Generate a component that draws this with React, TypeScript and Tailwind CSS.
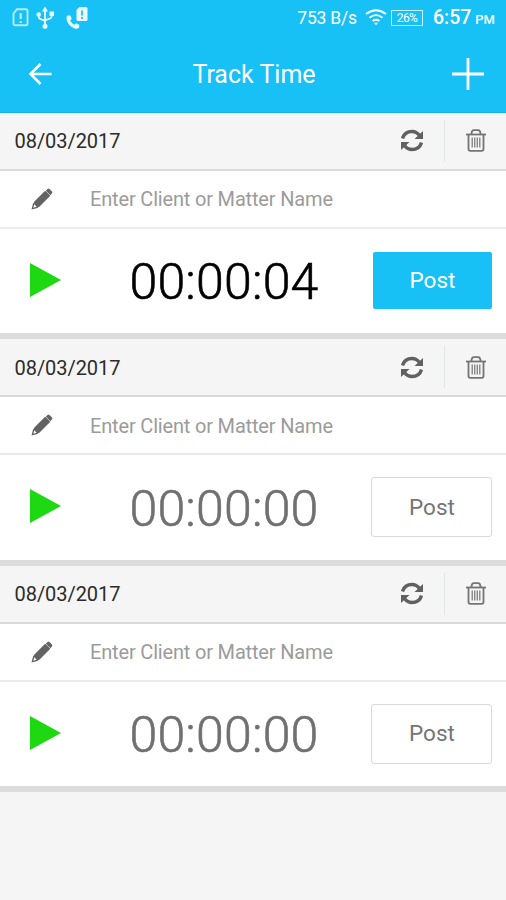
const StatusBar = () => {
  return (
    <div className="flex h-9 items-center justify-between pl-3 pr-[11px] text-white">
      <div className="flex items-center">
        <svg width="80" height="32" viewBox="0 0 80 32" fill="none">
          <g stroke="#b5ebfc" strokeWidth="1.9">
            <path d="M5 7.3h9a1.500 1.500 0 0 1 1.500 1.500v13a1.500 1.500 0 0 1-1.500 1.500H3a1.500 1.500 0 0 1-1.500-1.500V11.500z" />
            <path d="M8.700 11v6M8.700 19v2" strokeWidth="2.200" />
          </g>
          <g stroke="#e9faff" strokeWidth="1.800">
            <path d="M33 6v17M26.700 12v2.500q0 2 2 2.700l4.300 1.600M39.700 11v3q0 2-2 2.700L33 18.300" />
          </g>
          <g fill="#e9faff">
            <path d="M33 4.500l3 5h-6z" />
            <circle cx="33" cy="24.300" r="2.500" />
            <circle cx="26.700" cy="12.500" r="2.300" />
            <path d="M37.500 9.500h4.500v4.500h-4.500z" />
            <path d="M55.500 13.500l2.800 0 1.500 3.200-1.600 1.800q1.500 3 4 4.300l2-1.500 3.100 1.600-.2 2.800q-1.500 1.800-4.500.8-7-3-8.100-9.500-.2-2.600 1-3.500z" />
            <path d="M67.500 5H74q1.500 0 1.500 1.500v11q0 1.500-1.500 1.500h-8q-1.500 0-1.500-1.500V8z" />
          </g>
          <path d="M70 8.500v5M70 15v2" stroke="#17c0f5" strokeWidth="1.700" />
        </svg>
      </div>
      <div className="flex items-center">
        <span className="text-[17.500px] tracking-[-0.2px]">753 B/s</span>
        <svg
          className="ml-2"
          width="22"
          height="18"
          viewBox="0 0 22 18"
          fill="none"
          stroke="currentColor"
          strokeWidth="1.800"
        >
          <path d="M1 5q10-7.500 20 0M4.500 8.700q6.500-5 13 0M7.600 12q3.400-2.500 6.800 0" />
          <path d="M9 13.800h4l-2 2.400z" fill="currentColor" stroke="none" />
        </svg>
        <span className="mb-px ml-1 flex h-4 w-8 items-center justify-center border border-[#c9f1fd] text-[12px] tracking-[-0.700px]">
          26%
        </span>
        <span className="ml-2.5 text-[19.500px] font-medium">6:57</span>
        <span className="ml-1 mt-1 text-[13px] font-medium">PM</span>
      </div>
    </div>
  );
};

const Header = () => {
  return (
    <div className="flex h-[76.500px] items-center justify-between border-b border-[#14b3e6] pl-7 pr-[22px] text-white">
      <svg width="24" height="24" viewBox="0 0 24 24" fill="none" stroke="currentColor" strokeWidth="2.500">
        <path d="M12.500 2L2.500 12l10 10M2 12h21.500" />
      </svg>
      <p className="pl-1 pt-0.5 text-[25px]">Track Time</p>
      <svg width="32" height="32" viewBox="0 0 32 32" stroke="currentColor" strokeWidth="2.800">
        <path d="M16 0v32M0 16h32" />
      </svg>
    </div>
  );
};

const RefreshIcon = () => (
  <svg width="22" height="23" viewBox="0 0 22 23" fill="none" stroke="#606060">
    <path d="M1.500 9.500Q3.500 2.500 11 2.500q4.500 0 7.500 4M20.500 13.500Q18.500 20.500 11 20.500q-4.500 0-7.500-4" strokeWidth="3.400" />
    <path d="M22 2V10h-8.500zM0 21V13h8.500z" fill="#606060" stroke="none" />
  </svg>
);

const TrashIcon = () => (
  <svg width="20" height="23" viewBox="0 0 20 23" fill="none" stroke="#747474">
    <path d="M0 5.500h20" strokeWidth="1.800" />
    <path d="M5.500 5q0-3.800 2.500-3.800h4q2.500 0 2.500 3.800M2.500 6v14q0 1.800 1.800 1.800h11.400q1.800 0 1.800-1.800V6" strokeWidth="1.800" />
    <path d="M6.200 8.500v10M8.750 8.500v10M11.250 8.500v10M13.800 8.500v10" strokeWidth="1.200" />
  </svg>
);

const PencilIcon = () => (
  <svg width="22" height="22" viewBox="0 0 22 22" fill="#636363">
    <path d="M16.500 1q1-.8 2 .1l2.500 2.500q.8 1-.1 1.900L19.300 7.200 14.800 2.700z" />
    <path d="M14.200 3.300l4.500 4.500L6.500 20 .5 21.500 2 15.500zM3.300 16.300l-1 3.400 3.400-1z" fillRule="evenodd" />
    <path d="M3.500 14L14.200 3.300l4.500 4.500L7.500 19z" stroke="#636363" strokeWidth="1" />
  </svg>
);

const TimeCard = ({
  date,
  time,
  active,
}: {
  date: string;
  time: string;
  active?: boolean;
}) => {
  return (
    <div className="h-[226.500px] border-b-[6px] border-[#dcdcdc] bg-white">
      <div className="flex h-[58px] items-center border-b-2 border-[#d9d9d9] bg-[#f5f5f5] pl-[14.500px] pr-5">
        <p className="flex-1 pt-px text-[20px] tracking-[-0.050px] text-[#2b2b2b]">{date}</p>
        <RefreshIcon />
        <div className="ml-[21px] mr-[21px] h-[42px] w-px bg-[#e3e6e6]" />
        <TrashIcon />
      </div>
      <div className="flex h-[58px] items-center border-b-2 border-[#ebebeb] pl-[31px]">
        <PencilIcon />
        <p className="ml-[37px] pt-px text-[20px] tracking-[-0.170px] text-[#9b9b9b]">
          Enter Client or Matter Name
        </p>
      </div>
      <div className="flex h-[104px] items-center pl-[30px] pr-[14px]">
        <svg className="mb-0.5" width="31" height="34" viewBox="0 0 31 34" fill="#1ed811">
          <path d="M0 0l31 17L0 34z" />
        </svg>
        <p
          className={`ml-[68.500px] flex-1 pt-[3px] text-[50px] leading-none font-light tracking-[0.200px] [-webkit-text-stroke:0.600px] ${
            active ? "text-black" : "text-[#707070]"
          }`}
        >
          {time}
        </p>
        <button
          className={
            active
              ? "h-[57px] w-[119px] rounded-[2px] bg-[#17c0f5] pt-px text-[22.500px] text-white"
              : "h-[60px] w-[121px] rounded-[3px] border-[1.500px] border-[#d9d9d9] pl-px pt-px text-[22.500px] text-[#757575]"
          }
        >
          Post
        </button>
      </div>
    </div>
  );
};

export default function App() {
  return (
    <div className="h-[900px] w-[506px] overflow-hidden bg-[#f5f5f5] font-['Roboto',sans-serif]">
      <div className="bg-[#17c0f5]">
        <StatusBar />
        <Header />
      </div>
      <TimeCard date="08/03/2017" time="00:00:04" active />
      <TimeCard date="08/03/2017" time="00:00:00" />
      <TimeCard date="08/03/2017" time="00:00:00" />
    </div>
  );
}
